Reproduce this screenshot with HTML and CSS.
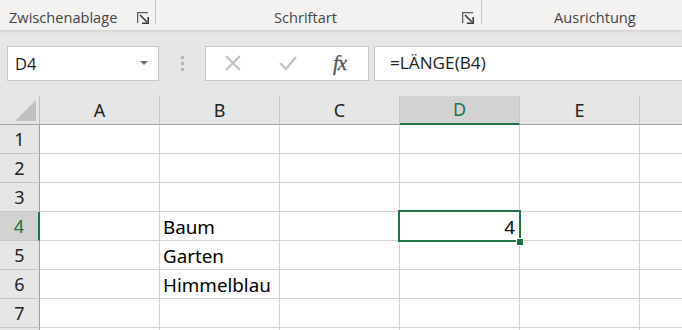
FILE: index.html
```html
<!DOCTYPE html>
<html lang="de">
<head>
    <meta charset="UTF-8">
    <title>Excel - LÄNGE</title>
    <link rel="stylesheet" href="styles.css">
</head>
<body>
    <div class="ribbon">
        <div class="group group-clip">
            <span class="group-label">Zwischenablage</span>
            <svg class="launcher" width="12" height="12" viewBox="0 0 12 12">
                <path d="M0.5 11V0.5H11" fill="none" stroke="#5a5a5a" stroke-width="1.5"/>
                <path d="M3 3L10 10" stroke="#3a3a3a" stroke-width="1.6"/>
                <path d="M5 11.2H11.2V5" fill="none" stroke="#3a3a3a" stroke-width="1.6"/>
            </svg>
        </div>
        <div class="group group-font">
            <span class="group-label">Schriftart</span>
            <svg class="launcher" width="12" height="12" viewBox="0 0 12 12">
                <path d="M0.5 11V0.5H11" fill="none" stroke="#5a5a5a" stroke-width="1.5"/>
                <path d="M3 3L10 10" stroke="#3a3a3a" stroke-width="1.6"/>
                <path d="M5 11.2H11.2V5" fill="none" stroke="#3a3a3a" stroke-width="1.6"/>
            </svg>
        </div>
        <div class="group group-align">
            <span class="group-label">Ausrichtung</span>
        </div>
    </div>

    <div class="formula-row">
        <div class="name-box">
            <span>D4</span>
            <svg width="8" height="5" viewBox="0 0 8 5"><path d="M0 0H8L4 4Z" fill="#707070"/></svg>
        </div>
        <div class="grip">
            <i></i><i></i><i></i>
        </div>
        <div class="fx-buttons">
            <svg class="btn-cancel" width="18" height="18" viewBox="0 0 18 18">
                <path d="M2 2L16 16M16 2L2 16" stroke="#bdbdbd" stroke-width="1.8"/>
            </svg>
            <svg class="btn-ok" width="20" height="18" viewBox="0 0 20 18">
                <path d="M2 9L8 15L18 3" fill="none" stroke="#c4c4c4" stroke-width="2.4"/>
            </svg>
            <span class="fx">fx</span>
        </div>
        <div class="formula-input">=LÄNGE(B4)</div>
    </div>

    <div class="sheet">
        <div class="corner"><span class="tri"></span></div>
        <div class="col-head">A</div>
        <div class="col-head">B</div>
        <div class="col-head">C</div>
        <div class="col-head active">D</div>
        <div class="col-head">E</div>
        <div class="col-head last"></div>

        <div class="row-head">1</div>
        <div class="cell"></div><div class="cell"></div><div class="cell"></div><div class="cell"></div><div class="cell"></div><div class="cell last"></div>

        <div class="row-head">2</div>
        <div class="cell"></div><div class="cell"></div><div class="cell"></div><div class="cell"></div><div class="cell"></div><div class="cell last"></div>

        <div class="row-head">3</div>
        <div class="cell"></div><div class="cell"></div><div class="cell"></div><div class="cell"></div><div class="cell"></div><div class="cell last"></div>

        <div class="row-head active">4</div>
        <div class="cell"></div><div class="cell">Baum</div><div class="cell"></div>
        <div class="cell selected"><span class="num">4</span><span class="handle"></span></div>
        <div class="cell"></div><div class="cell last"></div>

        <div class="row-head">5</div>
        <div class="cell"></div><div class="cell">Garten</div><div class="cell"></div><div class="cell"></div><div class="cell"></div><div class="cell last"></div>

        <div class="row-head">6</div>
        <div class="cell"></div><div class="cell">Himmelblau</div><div class="cell"></div><div class="cell"></div><div class="cell"></div><div class="cell last"></div>

        <div class="row-head">7</div>
        <div class="cell"></div><div class="cell"></div><div class="cell"></div><div class="cell"></div><div class="cell"></div><div class="cell last"></div>

        <div class="row-head"></div>
        <div class="cell"></div><div class="cell"></div><div class="cell"></div><div class="cell"></div><div class="cell"></div><div class="cell last"></div>
    </div>
</body>
</html>
```

FILE: styles.css
```css
* {
    box-sizing: border-box;
}

body {
    margin: 0;
    width: 682px;
    height: 330px;
    overflow: hidden;
    background: #e6e6e6;
    font-family: 'Open Sans', 'Noto Sans', sans-serif;
}

/* ribbon */
.ribbon {
    display: flex;
    height: 30px;
    background: #f3f2f1;
    box-shadow: 0 1px 3px rgba(0, 0, 0, 0.12);
    position: relative;
}

.group {
    display: flex;
    align-items: flex-start;
    height: 24px;
    border-right: 1px solid #c8c6c4;
}

.group-label {
    font-size: 14.6px;
    color: #444;
    line-height: 18px;
    margin-top: 8px;
}

.launcher {
    margin-top: 12px;
    margin-left: auto;
}

.group-clip {
    width: 156px;
    padding: 0 6px 0 9px;
}

.group-font {
    width: 326px;
    padding: 0 7px 0 118px;
}

.group-align {
    border-right: none;
    padding-left: 72px;
}

/* formula bar */
.formula-row {
    display: flex;
    align-items: center;
    height: 66px;
    padding: 0 0 0 7px;
}

.name-box {
    display: flex;
    align-items: center;
    justify-content: space-between;
    width: 152px;
    height: 35px;
    background: #fff;
    border: 1px solid #c6c6c6;
    padding: 0 10px 0 7px;
    font-size: 16.5px;
    color: #222;
}

.grip {
    display: flex;
    flex-direction: column;
    gap: 3px;
    width: 46px;
    align-items: center;
}

.grip i {
    width: 3px;
    height: 3px;
    background: #b5b5b5;
}

.fx-buttons {
    display: flex;
    align-items: center;
    width: 164px;
    height: 35px;
    background: #fff;
    border: 1px solid #c6c6c6;
    padding: 0 0 0 18px;
}

.btn-ok {
    margin-left: 36px;
}

.fx {
    margin-left: 35px;
    font-family: 'Liberation Serif', 'DejaVu Serif', serif;
    font-style: italic;
    font-size: 21px;
    color: #555;
    letter-spacing: -1px;
    -webkit-text-stroke: 0.3px #555;
}

.formula-input {
    flex: 1;
    height: 35px;
    margin-left: 5px;
    background: #fff;
    border: 1px solid #c6c6c6;
    border-right: none;
    padding-left: 15px;
    line-height: 32px;
    font-size: 17.2px;
    color: #222;
}

/* sheet */
.sheet {
    display: grid;
    grid-template-columns: 40px repeat(5, 120px) 1fr;
    grid-template-rows: 29px;
    grid-auto-rows: 29px;
    background: #fff;
    font-family: 'Noto Sans', 'Open Sans', sans-serif;
}

.corner {
    background: #e6e6e6;
    border-right: 1px solid #bdbdbd;
    border-bottom: 1px solid #9f9f9f;
    display: flex;
    align-items: flex-end;
    justify-content: flex-end;
    padding: 0 3px 3px 0;
}

.tri {
    width: 0;
    height: 0;
    border-left: 21px solid transparent;
    border-bottom: 21px solid #c0c0c0;
}

.col-head {
    background: #e6e6e6;
    border-right: 1px solid #c6c6c6;
    border-bottom: 1px solid #9f9f9f;
    text-align: center;
    font-size: 18px;
    line-height: 28px;
    color: #222;
}

.col-head.active {
    background: #d2d2d2;
    color: #217346;
    border-bottom: 2px solid #217346;
    line-height: 27px;
}

.col-head.last {
    border-right: none;
}

.row-head {
    background: #e6e6e6;
    border-right: 1px solid #9f9f9f;
    border-bottom: 1px solid #c6c6c6;
    text-align: center;
    font-size: 18px;
    line-height: 28px;
    color: #222;
}

.row-head.active {
    background: #d2d2d2;
    color: #217346;
    border-right: 2px solid #217346;
}

.cell {
    border-right: 1px solid #d4d4d4;
    border-bottom: 1px solid #d4d4d4;
    font-size: 18.8px;
    line-height: 30px;
    padding-left: 3px;
    color: #000;
    white-space: nowrap;
}

.cell.last {
    border-right: none;
}

.cell.selected {
    position: relative;
    text-align: right;
    padding-right: 4px;
}

.cell.selected::before {
    content: "";
    position: absolute;
    left: -2px;
    top: -2px;
    right: -2px;
    bottom: -2px;
    border: 2px solid #217346;
}

.handle {
    position: absolute;
    right: -4px;
    bottom: -5px;
    width: 6px;
    height: 6px;
    background: #217346;
    outline: 1px solid #fff;
}
```
